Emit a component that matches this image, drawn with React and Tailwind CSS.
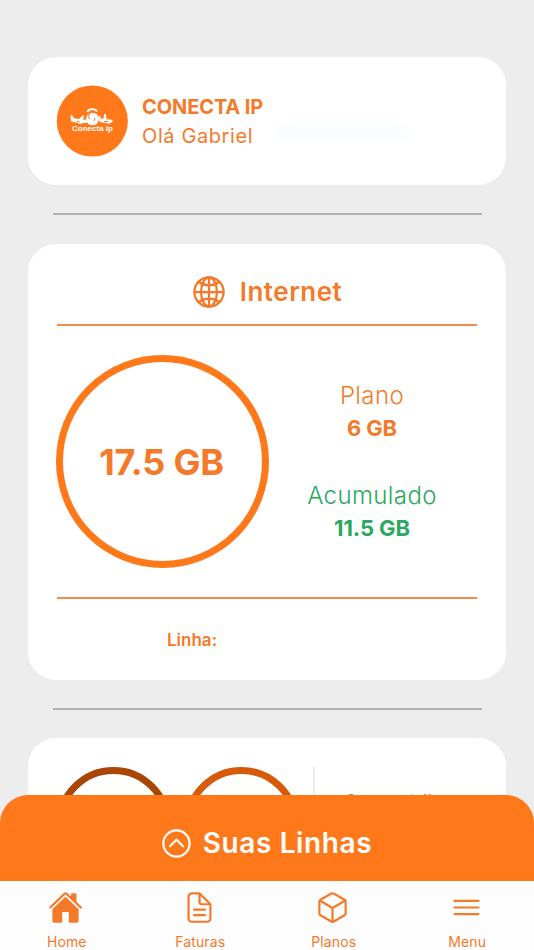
// App.jsx
import React from "react";
import {
    IoChevronUpCircleOutline,
    IoCubeOutline,
    IoDocumentTextOutline,
    IoGlobeOutline,
    IoHome,
    IoMenuOutline,
} from "react-icons/io5";

const tabs = [
    { label: "Home", icon: IoHome },
    { label: "Faturas", icon: IoDocumentTextOutline },
    { label: "Planos", icon: IoCubeOutline },
    { label: "Menu", icon: IoMenuOutline },
];

function Logo() {
    return (
        <svg viewBox="0 0 72 72" className="h-[72px] w-[72px] shrink-0">
            <circle cx="36.3" cy="36" r="35.6" fill="#ff781a" />
            {/* Globe with a plane on each side */}
            <circle cx="36.5" cy="34" r="6.3" fill="#fff" />
            <path d="M31.500 27.200c.5-3.500 7.500-4.200 9.500-.6" fill="none" stroke="#fff" strokeWidth="1.800" />
            <g fill="#fff">
                <path d="M14.500 30.500l1.600-.2 1.900 3 5 .6 3.500-3.400 1.600 0-1 3.900 4.400.4v3l-4 .3-3.500 1-2.500-1.200-6.500-1.700z" />
                <path d="M57 35.200l-3-.8-3.500-.2-.6-5.200-1.500 0-1.200 4.800-2.500-.2-.5-2.600-1.300 0-.4 4.500 3 2 3.500.3 3.500 1 3.500-1.600z" />
            </g>
            <path d="M34 28l-2 3.500 2 2.500M39 33l-1 3M20.500 36.300l3 .5M48 36.500l4 .1" fill="none" stroke="#ff781a" strokeWidth="1" />
            <text x="36.500" y="46" fill="#fff" textAnchor="middle" textLength="41" fontSize="8" fontWeight="700" fontFamily="Liberation Sans, sans-serif">
                Conecta Ip
            </text>
        </svg>
    );
}

function Header() {
    return (
        <header className="mx-[28px] flex h-[128px] items-center rounded-[28px] bg-white pl-[28px]">
            <Logo />
            <div className="ml-[14px] pt-[2px]">
                <h1 className="text-[20px] leading-[29px] font-bold tracking-[-0.1px]">CONECTA IP</h1>
                <p className="text-[20px] leading-[29px] tracking-[0.6px]">Olá Gabriel</p>
            </div>
            <div className="mt-6 ml-2 h-4 w-[140px] rounded-full bg-sky-50/40 blur-xs" />
        </header>
    );
}

function Usage({ label, value, className }) {
    return (
        <div className={`text-center ${className}`}>
            <p className="text-[24px] leading-[32px] font-[350] tracking-[0.4px]">{label}</p>
            <p className="text-[22px] leading-[32px] font-bold tracking-[-0.1px]">{value}</p>
        </div>
    );
}

function InternetCard() {
    return (
        <section className="mx-[28px] h-[436px] rounded-[28px] bg-white px-[28px] pt-[28px]">
            <div className="flex h-[39px] items-center justify-center gap-[13px] pr-px">
                <IoGlobeOutline className="h-[36px] w-[36px]" />
                <h2 className="text-[26px] font-semibold tracking-[0.5px]">Internet</h2>
            </div>
            <div className="mt-[13px] mr-px ml-px h-[2px] bg-[#f28c4a]" />

            <div className="mt-[29px] flex">
                <div className="flex h-[213px] w-[213px] items-center justify-center rounded-full border-[7px] border-[#ff781a]">
                    <span className="pr-[2px] text-[36px] font-bold tracking-[-0.2px]">17.5 GB</span>
                </div>
                <div className="ml-[1px] flex w-[204px] flex-col pt-[25px]">
                    <Usage label="Plano" value="6 GB" />
                    <Usage label="Acumulado" value="11.5 GB" className="mt-[36px] text-[#2aa860]" />
                </div>
            </div>

            <div className="mt-[29px] mr-px ml-px h-[2px] bg-[#f28c4a]" />
            <p className="mt-[28px] pl-[111px] text-[17px] leading-[26px] font-semibold">Linha:</p>
        </section>
    );
}

function CreditCard() {
    return (
        <section className="mx-[28px] flex h-[212px] rounded-[28px] bg-white pt-[29px] pl-[28px]">
            <div className="h-[115px] w-[115px] rounded-full border-[7px] border-[#a94604]" />
            <div className="ml-[13px] h-[115px] w-[115px] rounded-full border-[7px] border-[#d75a08]" />
            <div className="ml-[14px] h-[115px] w-[2px] bg-[#ececec]" />
            <p className="ml-[30px] pt-[22px] text-[18px] leading-[26px] font-medium tracking-[0.1px]">Sem crédito</p>
        </section>
    );
}

function Divider() {
    return <div className="mr-[52px] ml-[53px] h-[2px] bg-[#b0b0b0]" />;
}

export default function App() {
    return (
        <div className="relative h-[950px] w-[534px] overflow-hidden bg-[#ededed] font-['Inter',sans-serif] text-[#f47a2a]">
            <main className="flex flex-col pt-[57px]">
                <Header />
                <div className="pt-[28px] pb-[29px]">
                    <Divider />
                </div>
                <InternetCard />
                <div className="py-[28px]">
                    <Divider />
                </div>
                <CreditCard />
            </main>

            {/* Bottom sheet and tabs */}
            <div className="absolute inset-x-0 bottom-0">
                <button className="flex h-[86px] w-full items-center justify-center gap-[9px] rounded-t-[28px] bg-[#ff781a] pt-[10px] pr-[3px] text-white">
                    <IoChevronUpCircleOutline className="h-[35px] w-[35px]" />
                    <span className="text-[28px] font-semibold tracking-[0.6px]">Suas Linhas</span>
                </button>
                <nav className="grid h-[69px] grid-cols-4 bg-[#fdfdfd]">
                    {tabs.map(({ label, icon: Icon }) => (
                        <a key={label} className="flex flex-col items-center pt-[9px]">
                            <Icon className="mr-[2px] h-[35px] w-[35px]" />
                            <span className="mt-[8px] text-[14px] leading-[18px] tracking-[0.1px]">{label}</span>
                        </a>
                    ))}
                </nav>
            </div>
        </div>
    );
}
